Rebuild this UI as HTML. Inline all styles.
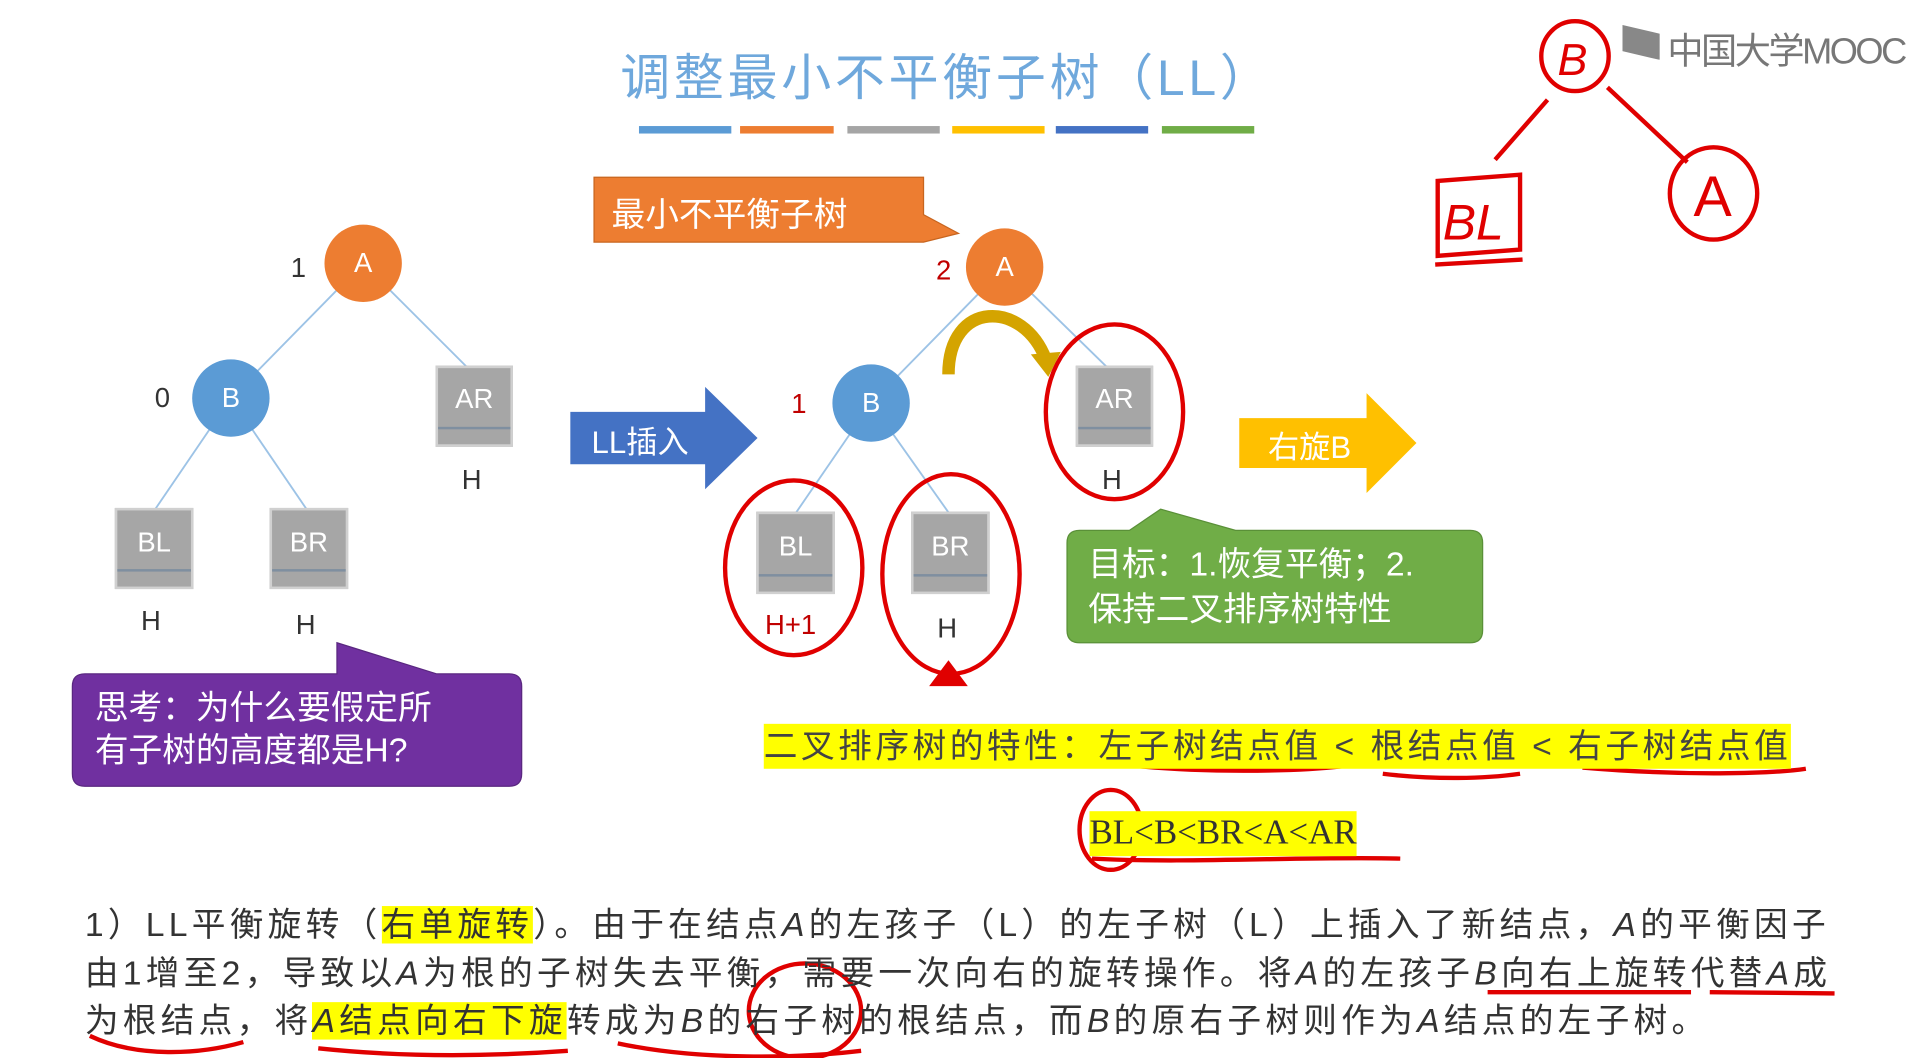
<!DOCTYPE html>
<html><head><meta charset="utf-8"><style>
html,body{margin:0;padding:0;background:#fff;overflow:hidden;width:1932px;height:1058px}
#c{position:absolute;left:0;top:0;width:1548px;height:848px;transform:scale(1.248);transform-origin:0 0;font-family:"Liberation Sans","Noto Sans CJK SC",sans-serif}
.a{position:absolute}
.t{position:absolute;white-space:nowrap}
.circ{position:absolute;border-radius:50%;color:#fff;text-align:center;font-size:22px}
.box{position:absolute;background:#a6a6a6;border:2px solid #d0d0d0;color:#fff;font-size:22px;text-align:center;box-sizing:border-box}
.box:after{content:"";position:absolute;left:0;right:0;bottom:12px;border-top:2px solid #7f8fa0}
.hl{background:#ffff00}
</style></head><body><div id="c">
<div class="t" style="left:497px;top:30px;font-size:40px;color:#6fa8dc;letter-spacing:3px">调整最小不平衡子树（LL）</div>
<div class="a" style="left:512px;top:101px;width:74px;height:6px;background:#5b9bd5"></div>
<div class="a" style="left:593px;top:101px;width:75px;height:6px;background:#ed7d31"></div>
<div class="a" style="left:679px;top:101px;width:74px;height:6px;background:#a5a5a5"></div>
<div class="a" style="left:763px;top:101px;width:74px;height:6px;background:#ffc000"></div>
<div class="a" style="left:846px;top:101px;width:74px;height:6px;background:#4472c4"></div>
<div class="a" style="left:931px;top:101px;width:74px;height:6px;background:#70ad47"></div>
<div class="t" style="left:1336px;top:18px;font-size:29px;color:#777;letter-spacing:-2px">中国大学MOOC</div>
<div class="a" style="left:1300px;top:20px;width:30px;height:28px;background:#888;clip-path:polygon(0 0,100% 25%,100% 100%,0 75%)"></div>

<svg class="a" style="left:0;top:0" width="1548" height="848">
<g stroke="#9dc3e6" stroke-width="1.5" fill="none">
<line x1="291" y1="211" x2="185" y2="319"/><line x1="291" y1="211" x2="380" y2="300"/>
<line x1="185" y1="319" x2="123" y2="410"/><line x1="185" y1="319" x2="247" y2="410"/>
<line x1="805" y1="214" x2="698" y2="323"/><line x1="805" y1="214" x2="893" y2="300"/>
<line x1="698" y1="323" x2="637" y2="412"/><line x1="698" y1="323" x2="761" y2="412"/>
</g>
<g stroke="#e00000" stroke-width="3.5" fill="none">
<ellipse cx="1262" cy="45" rx="27" ry="28"/><ellipse cx="1373" cy="155" rx="35" ry="37"/>
<path d="M1240 80 L1198 128"/><path d="M1288 70 L1352 130"/>
<path d="M1152 145 L1218 140 L1218 200 L1152 205 Z"/><path d="M1150 212 L1220 208"/>
<ellipse cx="893" cy="330" rx="55" ry="70"/>
<ellipse cx="636" cy="455" rx="55" ry="70"/>
<ellipse cx="762" cy="460" rx="55" ry="80"/>
<ellipse cx="890" cy="665" rx="25" ry="32"/>
<path d="M895 612 C960 620 1040 618 1075 614"/><path d="M1108 620 C1150 625 1190 624 1218 620"/><path d="M1268 615 C1350 622 1420 620 1447 616"/>
<path d="M875 688 C950 692 1050 686 1122 688"/>
<path d="M72 830 C110 848 160 845 195 835"/><path d="M255 840 C330 848 400 846 455 842"/><path d="M495 836 C560 850 640 848 690 842"/>
<ellipse cx="645" cy="810" rx="45" ry="38"/>
<path d="M1192 795 L1355 795"/><path d="M1370 795 L1470 796"/>
<path d="M748 548 L760 532 L772 548 Z" fill="#e00000"/>
</g>
<g fill="#e00000" font-family="Liberation Sans,sans-serif">
<text x="1248" y="60" font-size="36" font-style="italic">B</text>
<text x="1357" y="173" font-size="46">A</text>
<text x="1156" y="192" font-size="40" font-style="italic">BL</text>
</g>
<path d="M760 300 C760 240 820 240 838 288" stroke="#d4a400" stroke-width="10" fill="none"/>
<path d="M826 284 L850 282 L840 302 Z" fill="#d4a400"/>
<path d="M457 330 L565 330 L565 310 L607 351 L565 392 L565 372 L457 372 Z" fill="#4472c4"/>
<path d="M993 335 L1095 335 L1095 315 L1135 355 L1095 395 L1095 375 L993 375 Z" fill="#ffc000"/>
<path d="M476 142 L740 142 L740 172 L768 187 L740 194 L476 194 Z" fill="#ed7d31" stroke="#c8651f"/>
<path d="M58 550 Q58 540 68 540 L270 540 L270 515 L350 540 L408 540 Q418 540 418 550 L418 620 Q418 630 408 630 L68 630 Q58 630 58 620 Z" fill="#7030a0" stroke="#5a2780"/>
<path d="M865 425 L905 425 L930 408 L990 425 L1178 425 Q1188 425 1188 435 L1188 505 Q1188 515 1178 515 L865 515 Q855 515 855 505 L855 435 Q855 425 865 425 Z" fill="#70ad47" stroke="#5a9038"/>
</svg>
<div class="t" style="left:474px;top:335px;font-size:25px;color:#fff">LL插入</div>
<div class="t" style="left:1016px;top:339px;font-size:25px;color:#fff">右旋B</div>
<div class="t" style="left:490px;top:150px;font-size:27px;color:#fff">最小不平衡子树</div>
<div class="t" style="left:76px;top:550px;font-size:27px;color:#fff;line-height:34px">思考：为什么要假定所<br>有子树的高度都是H?</div>
<div class="t" style="left:872px;top:434px;font-size:27px;color:#fff;line-height:36px">目标：1.恢复平衡；2.<br>保持二叉排序树特性</div>

<div class="circ" style="left:260px;top:180px;width:62px;height:62px;line-height:62px;background:#ed7d31">A</div>
<div class="circ" style="left:154px;top:288px;width:62px;height:62px;line-height:62px;background:#5b9bd5">B</div>
<div class="t" style="left:233px;top:202px;font-size:22px;color:#333">1</div>
<div class="t" style="left:124px;top:306px;font-size:22px;color:#333">0</div>
<div class="box" style="left:349px;top:293px;width:62px;height:65px;line-height:50px">AR</div>
<div class="box" style="left:92px;top:407px;width:63px;height:65px;line-height:52px">BL</div>
<div class="box" style="left:216px;top:407px;width:63px;height:65px;line-height:52px">BR</div>
<div class="t" style="left:370px;top:372px;font-size:22px;color:#333">H</div>
<div class="t" style="left:113px;top:485px;font-size:22px;color:#333">H</div>
<div class="t" style="left:237px;top:488px;font-size:22px;color:#333">H</div>

<div class="circ" style="left:774px;top:183px;width:62px;height:62px;line-height:62px;background:#ed7d31">A</div>
<div class="circ" style="left:667px;top:292px;width:62px;height:62px;line-height:62px;background:#5b9bd5">B</div>
<div class="t" style="left:750px;top:204px;font-size:22px;color:#c00000">2</div>
<div class="t" style="left:634px;top:311px;font-size:22px;color:#c00000">1</div>
<div class="box" style="left:862px;top:293px;width:62px;height:65px;line-height:50px">AR</div>
<div class="box" style="left:606px;top:410px;width:63px;height:66px;line-height:52px">BL</div>
<div class="box" style="left:730px;top:410px;width:63px;height:66px;line-height:52px">BR</div>
<div class="t" style="left:883px;top:372px;font-size:22px;color:#333">H</div>
<div class="t" style="left:613px;top:488px;font-size:22px;color:#c00000">H+1</div>
<div class="t" style="left:751px;top:491px;font-size:22px;color:#333">H</div>

<div class="t hl" style="left:612px;top:580px;font-size:27px;color:#444;height:36px;line-height:36px;letter-spacing:2.8px">二叉排序树的特性：左子树结点值 &lt; 根结点值 &lt; 右子树结点值</div>
<div class="t hl" style="left:873px;top:650px;font-size:28px;color:#333;height:36px;line-height:36px;font-family:'Liberation Serif',serif">BL&lt;B&lt;BR&lt;A&lt;AR</div>
<div class="t" style="left:68px;top:722px;font-size:27px;color:#333;line-height:38.5px;letter-spacing:3.4px">1）LL平衡旋转（<span class="hl">右单旋转</span>）。由于在结点<i>A</i>的左孩子（L）的左子树（L）上插入了新结点，<i>A</i>的平衡因子<br>由1增至2，导致以<i>A</i>为根的子树失去平衡，需要一次向右的旋转操作。将<i>A</i>的左孩子<i>B</i>向右上旋转代替<i>A</i>成<br>为根结点，将<span class="hl"><i>A</i>结点向右下旋</span>转成为<i>B</i>的右子树的根结点，而<i>B</i>的原右子树则作为<i>A</i>结点的左子树。</div>
</div></body></html>
